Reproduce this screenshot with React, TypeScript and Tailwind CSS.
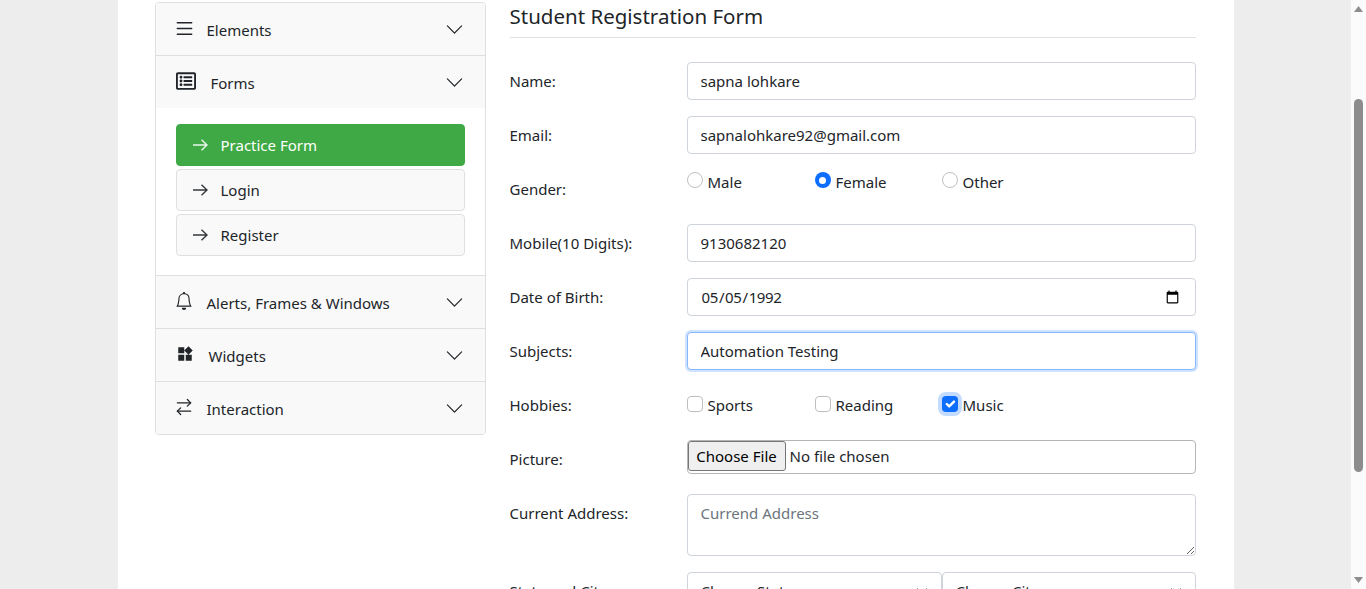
import React from "react";
import { BsList, BsBell, BsChevronDown } from "react-icons/bs";
import { FaRegListAlt } from "react-icons/fa";
import { MdWidgets } from "react-icons/md";
import { ArrowRightLeft } from "lucide-react";

const inputCls =
  "w-full h-[38px] rounded-[4px] border border-[#ced4da] bg-white px-[13px] text-[#212529] outline-none";

function Header({ icon, label, gap, last }: { icon: React.ReactNode; label: string; gap: string; last?: boolean }) {
  return (
    <div className={`${last ? "h-[52px]" : "h-[53px] border-b border-[#dfdfdf]"} bg-[#f9f9f9] flex items-center pl-5 pr-[21px]`}>
      <span className={`flex w-[20px] justify-start text-[#212529] -mt-[2px] ${gap}`}>{icon}</span>
      <span className="text-[#212529] flex-1 mt-[2px]">{label}</span>
      <BsChevronDown className="text-[#212529]" size={19} />
    </div>
  );
}

function SubItem({ label, active }: { label: string; active?: boolean }) {
  return (
    <div
      className={`h-[42px] flex items-center pl-[16px] rounded-[4px] border ${
        active ? "bg-[#3fa945] border-[#3fa945] text-white" : "bg-[#f9f9f9] border-[#dfdfdf] text-[#212529]"
      }`}
    >
      <svg width="15" height="12" viewBox="0 0 15 12" fill="none" stroke="currentColor" strokeWidth="1.4" className="mr-[13px] opacity-90">
        <path d="M0 6h14M8.5 .7 14 6l-5.5 5.3" />
      </svg>
      <span>{label}</span>
    </div>
  );
}

function Row({ label, children, h = "h-[38px]" }: { label: string; children: React.ReactNode; h?: string }) {
  return (
    <div className={`flex mb-4 ${h}`}>
      <div className="w-[177px] pt-[7px] leading-6 text-[#212529] shrink-0">{label}</div>
      <div className="flex-1">{children}</div>
    </div>
  );
}

function Radio({ label, checked, w }: { label: string; checked?: boolean; w: string }) {
  return (
    <div className={`${w} flex items-start text-[#212529]`}>
      <span
        className={`mt-[2px] w-4 h-4 rounded-full flex items-center justify-center shrink-0 ${
          checked ? "bg-[#0d6efd]" : "bg-white border border-[#bfbfbf]"
        }`}
      >
        {checked && <span className="w-[7px] h-[7px] rounded-full bg-white" />}
      </span>
      <span className="ml-[5px] leading-6">{label}</span>
    </div>
  );
}

function Check({ label, checked, w }: { label: string; checked?: boolean; w: string }) {
  return (
    <div className={`${w} flex items-start text-[#212529]`}>
      <span
        className={`mt-[10px] w-4 h-4 rounded-[4px] flex items-center justify-center shrink-0 ${
          checked ? "bg-[#0d6efd] shadow-[0_0_0_4px_rgba(13,110,253,0.25)]" : "bg-white border border-[#bfbfbf]"
        }`}
      >
        {checked && (
          <svg viewBox="0 0 20 20" className="w-4 h-4">
            <path fill="none" stroke="#fff" strokeLinecap="round" strokeLinejoin="round" strokeWidth="3" d="m6 10 3 3 6-6" />
          </svg>
        )}
      </span>
      <span className="ml-[5px] mt-[7px] leading-6">{label}</span>
    </div>
  );
}

function SelectBox({ text, cls }: { text: string; cls: string }) {
  return (
    <div className={`${cls} h-[38px] rounded-[4px] border border-[#ced4da] bg-white flex items-center px-[13px] text-[#212529]`}>
      <span className="flex-1">{text}</span>
      <BsChevronDown size={12} />
    </div>
  );
}

export default function App() {
  return (
    <div className="h-[589px] overflow-hidden flex text-[15px] bg-[#ededed]" style={{ fontFamily: '"Noto Sans", sans-serif' }}>
      <div className="flex-1 min-w-0 flex justify-center">
        <div className="w-[1116px] h-[589px] overflow-hidden bg-white pl-[37px] flex gap-6 pt-[2px]">
          {/* sidebar */}
          <div className="w-[331px] shrink-0 self-start rounded-[4px] border border-[#dfdfdf] overflow-hidden">
            <Header icon={<BsList size={23} className="-ml-[3px]" />} label="Elements" gap="mr-[11px]" />
            <Header icon={<FaRegListAlt size={20} />} label="Forms" gap="mr-[15px]" last />
            <div className="bg-white px-5 pt-4 pb-[19px] flex flex-col gap-[3px] border-b border-[#dfdfdf]">
              <SubItem label="Practice Form" active />
              <SubItem label="Login" />
              <SubItem label="Register" />
            </div>
            <Header icon={<BsBell size={18} className="-ml-[1px]" />} label="Alerts, Frames & Windows" gap="mr-[11px]" />
            <Header icon={<MdWidgets size={18} />} label="Widgets" gap="mr-[13px]" />
            <Header icon={<ArrowRightLeft size={20} strokeWidth={1.5} className="-ml-[2px]" />} label="Interaction" gap="mr-[11px]" last />
          </div>
          {/* form */}
          <div className="w-[686px] shrink-0 -mt-[2px]">
            <div className="h-[38px] border-b border-[#dee2e6] mb-6 text-[20.5px] leading-[33px] text-[#212529]">
              Student Registration Form
            </div>
            <Row label="Name:">
              <input readOnly className={inputCls} defaultValue="sapna lohkare" />
            </Row>
            <Row label="Email:">
              <input readOnly className={inputCls} defaultValue="sapnalohkare92@gmail.com" />
            </Row>
            <div className="flex mb-4 h-[38px]">
              <div className="w-[177px] pt-[7px] leading-6 text-[#212529] shrink-0">Gender:</div>
              <div className="flex-1 flex">
                <Radio label="Male" w="w-[128px]" />
                <Radio label="Female" checked w="w-[127px]" />
                <Radio label="Other" w="w-[127px]" />
              </div>
            </div>
            <Row label="Mobile(10 Digits):">
              <input readOnly className={inputCls} defaultValue="9130682120" />
            </Row>
            <Row label="Date of Birth:">
              <input type="date" className={`${inputCls} tracking-[-0.4px]`} defaultValue="1992-05-05" />
            </Row>
            <Row label="Subjects:">
              <input
                readOnly
                className="w-full h-[38px] rounded-[4px] border border-[#86b7fe] bg-white px-[13px] text-[#212529] outline-none shadow-[0_0_0_2px_rgba(13,110,253,0.2)]"
                defaultValue="Automation Testing"
              />
            </Row>
            <Row label="Hobbies:">
              <div className="flex">
                <Check label="Sports" w="w-[128px]" />
                <Check label="Reading" w="w-[127px]" />
                <Check label="Music" checked w="w-[127px]" />
              </div>
            </Row>
            <Row label="Picture:">
              <input
                type="file"
                className="block w-full h-[34px] rounded-[4px] border border-[#b5b5b5] text-[#212529] pt-0 file:h-[30px] file:w-[98px] file:mt-0 file:mr-1 file:bg-[#efefef] file:border file:border-[#767676] file:rounded-[3px] file:text-black"
              />
            </Row>
            <Row label="Current Address:" h="h-[62px]">
              <textarea
                readOnly
                placeholder="Currend Address"
                className="block w-full h-[62px] rounded-[4px] border border-[#ced4da] bg-white px-[13px] py-[6px] outline-none leading-6 placeholder:text-[#6c757d]"
              />
            </Row>
            <Row label="State and City">
              <div className="flex">
                <SelectBox text="Choose State" cls="w-[255px]" />
                <SelectBox text="Choose City" cls="flex-1" />
              </div>
            </Row>
          </div>
        </div>
      </div>
      {/* scrollbar */}
      <div className="w-[15px] shrink-0 h-[589px] bg-[#fbfbfb] flex flex-col items-center">
        <svg width="9" height="6" viewBox="0 0 9 6" className="mt-[6px] shrink-0"><path d="M4.5 0 9 6H0z" fill="#8d8d8d" /></svg>
        <div className="w-[9px] h-[373px] mt-[87px] rounded-full bg-[#8d8d8d]" />
        <svg width="9" height="6" viewBox="0 0 9 6" className="mt-auto mb-[6px] shrink-0"><path d="M0 0h9L4.5 6z" fill="#8d8d8d" /></svg>
      </div>
    </div>
  );
}
